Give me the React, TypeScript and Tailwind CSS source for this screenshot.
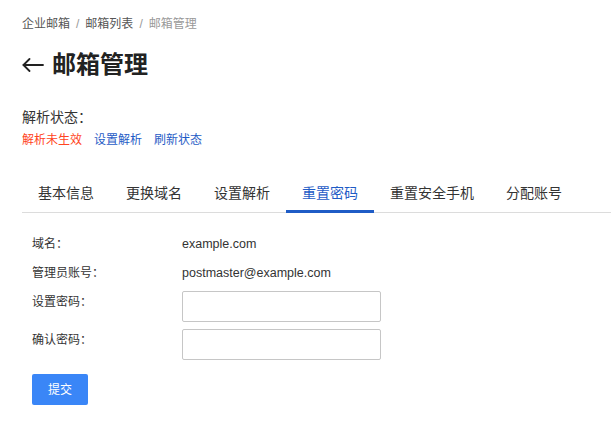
import React from "react";

const tabs = ["基本信息", "更换域名", "设置解析", "重置密码", "重置安全手机", "分配账号"];

export default function App() {
  return (
    <div className="min-h-screen bg-white pl-[22px] pt-[16px] font-['Liberation_Sans','Noto_Sans_CJK_SC',sans-serif] text-[#333]">
      <div className="flex items-center text-[12px] leading-[16px]">
        <span className="text-[#555]">企业邮箱</span>
        <span className="mx-[6px] text-[#999]">/</span>
        <span className="text-[#555]">邮箱列表</span>
        <span className="mx-[6px] text-[#999]">/</span>
        <span className="text-[#999]">邮箱管理</span>
      </div>

      <div className="mt-[17px] flex items-center gap-[8px]">
        <svg width="22" height="14" viewBox="0 0 22 14" fill="none" stroke="#222" strokeWidth="1.8" strokeLinecap="round" strokeLinejoin="round">
          <path d="M21 7H1.5" />
          <path d="M7.5 1L1.5 7L7.5 13" />
        </svg>
        <h1 className="text-[24px] font-bold leading-[32px] text-[#222]">邮箱管理</h1>
      </div>

      <div className="mt-[26px] text-[14px] leading-[20px] text-[#333]">解析状态：</div>
      <div className="mt-[4px] flex items-center gap-[12px] text-[12px] leading-[18px]">
        <span className="text-[#ff4422]">解析未生效</span>
        <span className="text-[#1f5cc6]">设置解析</span>
        <span className="text-[#1f5cc6]">刷新状态</span>
      </div>

      <div className="mt-[24px] flex border-b border-[#dcdcdc]">
        {tabs.map((t, i) => {
          const active = i === 3;
          return (
            <div
              key={t}
              className={
                active
                  ? "-mb-px border-b-[3px] border-[#1f5cc6] px-4 pb-[7px] pt-[10px] text-[14px] leading-[20px] text-[#1f5cc6]"
                  : "-mb-px border-b-[3px] border-transparent px-4 pb-[7px] pt-[10px] text-[14px] leading-[20px] text-[#333]"
              }
            >
              {t}
            </div>
          );
        })}
      </div>

      <div className="mt-[22px] pl-[10px] text-[12px] leading-[18px]">
        <div className="flex">
          <div className="w-[150px] text-[#333]">域名：</div>
          <div className="text-[12.5px] text-[#333]">example.com</div>
        </div>
        <div className="mt-[11px] flex">
          <div className="w-[150px] text-[#333]">管理员账号：</div>
          <div className="text-[12.5px] text-[#333]">postmaster@example.com</div>
        </div>
        <div className="mt-[9px] flex items-start">
          <div className="w-[150px] pt-[2px] text-[#333]">设置密码：</div>
          <input type="password" className="h-[31px] w-[199px] rounded-[2px] border border-[#c6c6c6] bg-white outline-none" />
        </div>
        <div className="mt-[7px] flex items-start">
          <div className="w-[150px] pt-[2px] text-[#333]">确认密码：</div>
          <input type="password" className="h-[31px] w-[199px] rounded-[2px] border border-[#c6c6c6] bg-white outline-none" />
        </div>
        <button className="mt-[14px] flex h-[31px] w-[56px] items-center justify-center rounded-[2px] bg-[#3a86f7] text-[12px] text-white">
          提交
        </button>
      </div>
    </div>
  );
}
